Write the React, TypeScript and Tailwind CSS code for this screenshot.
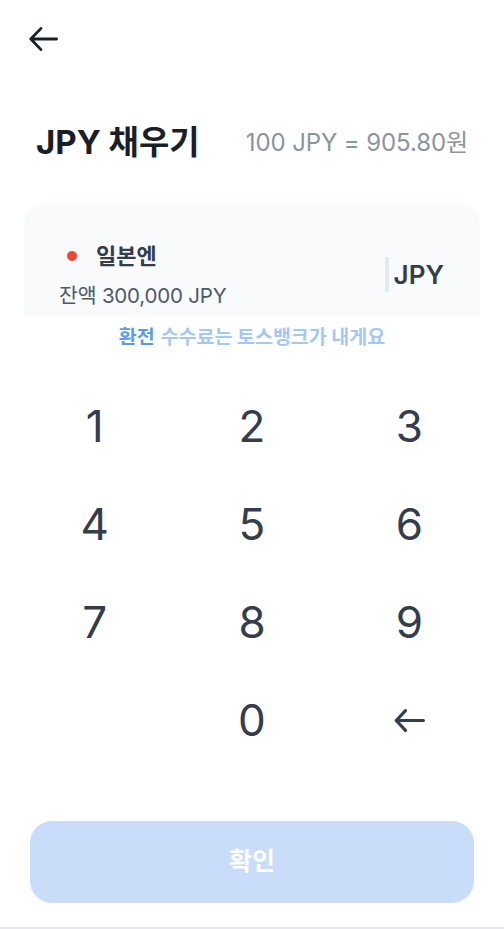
import React from "react";

const Arrow = ({ w, h, sw, color }: { w: number; h: number; sw: number; color: string }) => (
  <svg width={w} height={h} viewBox={`0 0 ${w} ${h}`} fill="none">
    <path
      d={`M${sw} ${h / 2} H${w - sw / 2} M${h / 2} ${sw / 2 + 1} L${sw} ${h / 2} L${h / 2} ${h - sw / 2 - 1}`}
      stroke={color}
      strokeWidth={sw}
      strokeLinecap="round"
      strokeLinejoin="round"
    />
  </svg>
);

export default function App() {
  const keys = ["1", "2", "3", "4", "5", "6", "7", "8", "9", "", "0", "back"];
  return (
    <div className="w-[504px] h-[929px] bg-white flex flex-col font-['Inter','Noto_Sans_CJK_KR',sans-serif] overflow-hidden">
      <div className="h-[78px] flex items-center pl-[28px]">
        <Arrow w={30} h={26} sw={2.8} color="#191f28" />
      </div>
      <div className="h-[127px] pt-[44px] pl-[36px] pr-[36px]">
        <div className="h-[42px] flex items-center justify-between">
          <span className="text-[33px] font-bold text-[#191f28]">JPY 채우기</span>
          <span className="text-[24px] text-[#8b95a1] tracking-[-0.1px]">100 JPY = 905.80원</span>
        </div>
      </div>
      <div className="mx-[24px] h-[111px] rounded-t-[20px] bg-[#f9fafb] flex items-start justify-between pl-[35px] pr-[36px]">
        <div className="flex flex-col pt-[36px]">
          <div className="flex items-center h-[30px]">
            <span className="w-[10px] h-[10px] rounded-full bg-[#f04438] ml-[8px] mr-[19px]" />
            <span className="text-[22px] font-bold text-[#333d4b]">일본엔</span>
          </div>
          <div className="mt-[12px] h-[26px] flex items-center text-[20.5px] text-[#4e5968] tracking-[-0.2px]">잔액 300,000 JPY</div>
        </div>
        <div className="flex items-center pt-[52px]">
          <span className="w-[4px] h-[35px] bg-[#dfe9f8] mr-[5px]" />
          <span className="text-[26px] font-semibold text-[#333d4b] leading-[35px]">JPY</span>
        </div>
      </div>
      <div className="h-[42px] pt-[2px] flex items-center justify-center text-[19.5px] font-bold">
        <span className="text-[#5b9be6]">환전</span>
        <span className="text-[#a4c8f2] ml-[6px]">수수료는 토스뱅크가 내게요</span>
      </div>
      <div className="mt-[19px] px-[16px] grid grid-cols-3">
        {keys.map((k, i) => (
          <div key={i} className="h-[98px] flex items-center justify-center text-[44px] text-[#333d4b]">
            {k === "back" ? <Arrow w={32} h={25} sw={3.2} color="#333d4b" /> : k}
          </div>
        ))}
      </div>
      <div className="flex-1" />
      <div className="mx-[30px] h-[82px] rounded-[22px] bg-[#c9ddfb] flex items-center justify-center text-[25px] font-semibold text-white">
        확인
      </div>
      <div className="h-[24px]" />
      <div className="h-[2px] bg-[#e5e8eb]" />
    </div>
  );
}
